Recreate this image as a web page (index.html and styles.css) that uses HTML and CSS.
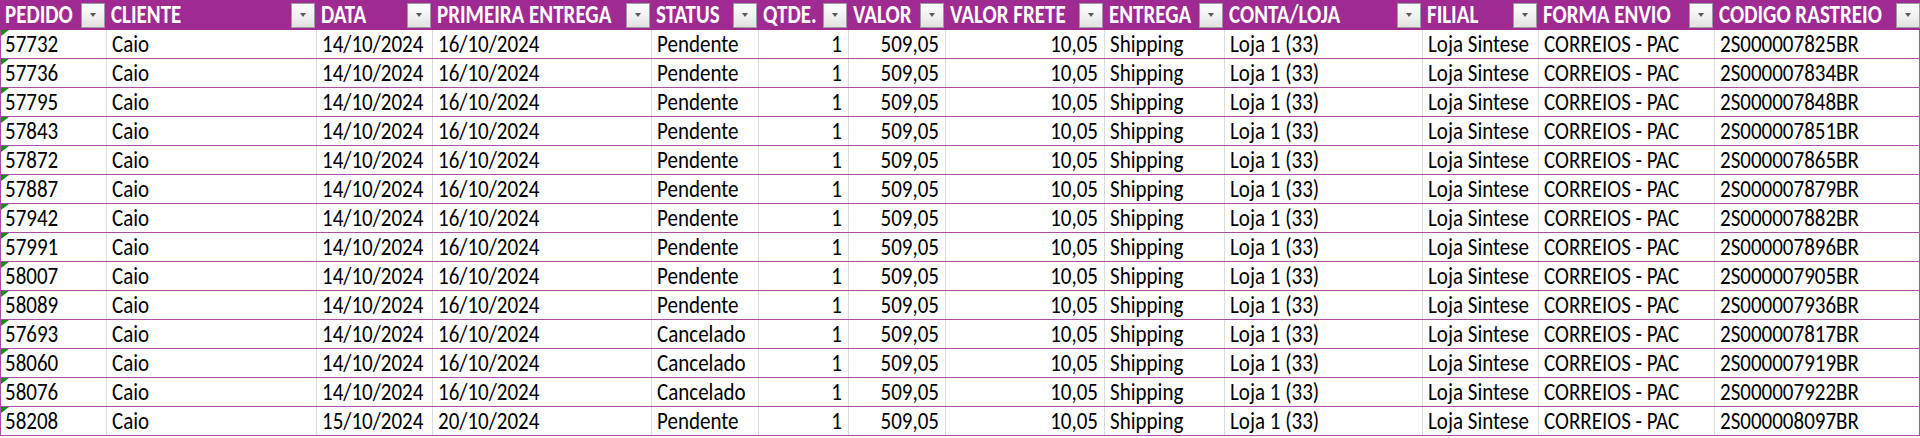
FILE: index.html
```html
<!DOCTYPE html>
<html lang="pt-BR">
<head>
<meta charset="utf-8">
<title>Pedidos</title>
<link rel="stylesheet" href="styles.css">
</head>
<body>
<div class="sheet">
  <div class="row head">
    <div class="hc"><span>PEDIDO</span><i class="fb"></i></div>
    <div class="hc"><span>CLIENTE</span><i class="fb"></i></div>
    <div class="hc"><span>DATA</span><i class="fb"></i></div>
    <div class="hc"><span>PRIMEIRA ENTREGA</span><i class="fb"></i></div>
    <div class="hc"><span>STATUS</span><i class="fb"></i></div>
    <div class="hc"><span>QTDE.</span><i class="fb"></i></div>
    <div class="hc"><span>VALOR</span><i class="fb"></i></div>
    <div class="hc"><span>VALOR FRETE</span><i class="fb"></i></div>
    <div class="hc"><span>ENTREGA</span><i class="fb"></i></div>
    <div class="hc"><span>CONTA/LOJA</span><i class="fb"></i></div>
    <div class="hc"><span>FILIAL</span><i class="fb"></i></div>
    <div class="hc"><span>FORMA ENVIO</span><i class="fb"></i></div>
    <div class="hc"><span>CODIGO RASTREIO</span><i class="fb"></i></div>
  </div>
  <div class="row"><div class="c t"><span>57732</span></div><div class="c"><span>Caio</span></div><div class="c"><span>14/10/2024</span></div><div class="c"><span>16/10/2024</span></div><div class="c"><span>Pendente</span></div><div class="c r"><span>1</span></div><div class="c r"><span>509,05</span></div><div class="c r"><span>10,05</span></div><div class="c"><span>Shipping</span></div><div class="c"><span>Loja 1 (33)</span></div><div class="c"><span>Loja Sintese</span></div><div class="c"><span>CORREIOS - PAC</span></div><div class="c"><span>2S000007825BR</span></div></div>
  <div class="row"><div class="c t"><span>57736</span></div><div class="c"><span>Caio</span></div><div class="c"><span>14/10/2024</span></div><div class="c"><span>16/10/2024</span></div><div class="c"><span>Pendente</span></div><div class="c r"><span>1</span></div><div class="c r"><span>509,05</span></div><div class="c r"><span>10,05</span></div><div class="c"><span>Shipping</span></div><div class="c"><span>Loja 1 (33)</span></div><div class="c"><span>Loja Sintese</span></div><div class="c"><span>CORREIOS - PAC</span></div><div class="c"><span>2S000007834BR</span></div></div>
  <div class="row"><div class="c t"><span>57795</span></div><div class="c"><span>Caio</span></div><div class="c"><span>14/10/2024</span></div><div class="c"><span>16/10/2024</span></div><div class="c"><span>Pendente</span></div><div class="c r"><span>1</span></div><div class="c r"><span>509,05</span></div><div class="c r"><span>10,05</span></div><div class="c"><span>Shipping</span></div><div class="c"><span>Loja 1 (33)</span></div><div class="c"><span>Loja Sintese</span></div><div class="c"><span>CORREIOS - PAC</span></div><div class="c"><span>2S000007848BR</span></div></div>
  <div class="row"><div class="c t"><span>57843</span></div><div class="c"><span>Caio</span></div><div class="c"><span>14/10/2024</span></div><div class="c"><span>16/10/2024</span></div><div class="c"><span>Pendente</span></div><div class="c r"><span>1</span></div><div class="c r"><span>509,05</span></div><div class="c r"><span>10,05</span></div><div class="c"><span>Shipping</span></div><div class="c"><span>Loja 1 (33)</span></div><div class="c"><span>Loja Sintese</span></div><div class="c"><span>CORREIOS - PAC</span></div><div class="c"><span>2S000007851BR</span></div></div>
  <div class="row"><div class="c t"><span>57872</span></div><div class="c"><span>Caio</span></div><div class="c"><span>14/10/2024</span></div><div class="c"><span>16/10/2024</span></div><div class="c"><span>Pendente</span></div><div class="c r"><span>1</span></div><div class="c r"><span>509,05</span></div><div class="c r"><span>10,05</span></div><div class="c"><span>Shipping</span></div><div class="c"><span>Loja 1 (33)</span></div><div class="c"><span>Loja Sintese</span></div><div class="c"><span>CORREIOS - PAC</span></div><div class="c"><span>2S000007865BR</span></div></div>
  <div class="row"><div class="c t"><span>57887</span></div><div class="c"><span>Caio</span></div><div class="c"><span>14/10/2024</span></div><div class="c"><span>16/10/2024</span></div><div class="c"><span>Pendente</span></div><div class="c r"><span>1</span></div><div class="c r"><span>509,05</span></div><div class="c r"><span>10,05</span></div><div class="c"><span>Shipping</span></div><div class="c"><span>Loja 1 (33)</span></div><div class="c"><span>Loja Sintese</span></div><div class="c"><span>CORREIOS - PAC</span></div><div class="c"><span>2S000007879BR</span></div></div>
  <div class="row"><div class="c t"><span>57942</span></div><div class="c"><span>Caio</span></div><div class="c"><span>14/10/2024</span></div><div class="c"><span>16/10/2024</span></div><div class="c"><span>Pendente</span></div><div class="c r"><span>1</span></div><div class="c r"><span>509,05</span></div><div class="c r"><span>10,05</span></div><div class="c"><span>Shipping</span></div><div class="c"><span>Loja 1 (33)</span></div><div class="c"><span>Loja Sintese</span></div><div class="c"><span>CORREIOS - PAC</span></div><div class="c"><span>2S000007882BR</span></div></div>
  <div class="row"><div class="c t"><span>57991</span></div><div class="c"><span>Caio</span></div><div class="c"><span>14/10/2024</span></div><div class="c"><span>16/10/2024</span></div><div class="c"><span>Pendente</span></div><div class="c r"><span>1</span></div><div class="c r"><span>509,05</span></div><div class="c r"><span>10,05</span></div><div class="c"><span>Shipping</span></div><div class="c"><span>Loja 1 (33)</span></div><div class="c"><span>Loja Sintese</span></div><div class="c"><span>CORREIOS - PAC</span></div><div class="c"><span>2S000007896BR</span></div></div>
  <div class="row"><div class="c t"><span>58007</span></div><div class="c"><span>Caio</span></div><div class="c"><span>14/10/2024</span></div><div class="c"><span>16/10/2024</span></div><div class="c"><span>Pendente</span></div><div class="c r"><span>1</span></div><div class="c r"><span>509,05</span></div><div class="c r"><span>10,05</span></div><div class="c"><span>Shipping</span></div><div class="c"><span>Loja 1 (33)</span></div><div class="c"><span>Loja Sintese</span></div><div class="c"><span>CORREIOS - PAC</span></div><div class="c"><span>2S000007905BR</span></div></div>
  <div class="row"><div class="c t"><span>58089</span></div><div class="c"><span>Caio</span></div><div class="c"><span>14/10/2024</span></div><div class="c"><span>16/10/2024</span></div><div class="c"><span>Pendente</span></div><div class="c r"><span>1</span></div><div class="c r"><span>509,05</span></div><div class="c r"><span>10,05</span></div><div class="c"><span>Shipping</span></div><div class="c"><span>Loja 1 (33)</span></div><div class="c"><span>Loja Sintese</span></div><div class="c"><span>CORREIOS - PAC</span></div><div class="c"><span>2S000007936BR</span></div></div>
  <div class="row"><div class="c t"><span>57693</span></div><div class="c"><span>Caio</span></div><div class="c"><span>14/10/2024</span></div><div class="c"><span>16/10/2024</span></div><div class="c"><span>Cancelado</span></div><div class="c r"><span>1</span></div><div class="c r"><span>509,05</span></div><div class="c r"><span>10,05</span></div><div class="c"><span>Shipping</span></div><div class="c"><span>Loja 1 (33)</span></div><div class="c"><span>Loja Sintese</span></div><div class="c"><span>CORREIOS - PAC</span></div><div class="c"><span>2S000007817BR</span></div></div>
  <div class="row"><div class="c t"><span>58060</span></div><div class="c"><span>Caio</span></div><div class="c"><span>14/10/2024</span></div><div class="c"><span>16/10/2024</span></div><div class="c"><span>Cancelado</span></div><div class="c r"><span>1</span></div><div class="c r"><span>509,05</span></div><div class="c r"><span>10,05</span></div><div class="c"><span>Shipping</span></div><div class="c"><span>Loja 1 (33)</span></div><div class="c"><span>Loja Sintese</span></div><div class="c"><span>CORREIOS - PAC</span></div><div class="c"><span>2S000007919BR</span></div></div>
  <div class="row"><div class="c t"><span>58076</span></div><div class="c"><span>Caio</span></div><div class="c"><span>14/10/2024</span></div><div class="c"><span>16/10/2024</span></div><div class="c"><span>Cancelado</span></div><div class="c r"><span>1</span></div><div class="c r"><span>509,05</span></div><div class="c r"><span>10,05</span></div><div class="c"><span>Shipping</span></div><div class="c"><span>Loja 1 (33)</span></div><div class="c"><span>Loja Sintese</span></div><div class="c"><span>CORREIOS - PAC</span></div><div class="c"><span>2S000007922BR</span></div></div>
  <div class="row"><div class="c t"><span>58208</span></div><div class="c"><span>Caio</span></div><div class="c"><span>15/10/2024</span></div><div class="c"><span>20/10/2024</span></div><div class="c"><span>Pendente</span></div><div class="c r"><span>1</span></div><div class="c r"><span>509,05</span></div><div class="c r"><span>10,05</span></div><div class="c"><span>Shipping</span></div><div class="c"><span>Loja 1 (33)</span></div><div class="c"><span>Loja Sintese</span></div><div class="c"><span>CORREIOS - PAC</span></div><div class="c"><span>2S000008097BR</span></div></div>
</div>
</body>
</html>
```

FILE: styles.css
```css
html, body {
  margin: 0;
  padding: 0;
  background: #ffffff;
}

.sheet {
  width: 1920px;
  font-family: Carlito, Calibri, Lato, "Open Sans", sans-serif;
  font-size: 21px;
  color: #000;
}

.row {
  display: grid;
  grid-template-columns: 105px 210px 116px 219px 107px 90px 97px 159px 120px 198px 116px 176px 207px;
  height: 29px;
  box-sizing: border-box;
  border-bottom: 1px solid #a94fa8;
  border-left: 1px solid #a94fa8;
  border-right: 1px solid #a94fa8;
}

.row.head {
  height: 30px;
  background: #9e2a92;
  border-color: #9e2a92;
}

.hc {
  display: flex;
  align-items: center;
  justify-content: space-between;
  min-width: 0;
  padding-left: 5px;
  padding-right: 1px;
  color: #fff;
  font-weight: bold;
  white-space: nowrap;
}

.hc:first-child {
  padding-left: 4px;
}

.hc span {
  display: inline-block;
  line-height: 24px;
  transform: scaleY(1.2);
}

.fb {
  position: relative;
  flex: none;
  width: 24px;
  height: 25px;
  box-sizing: border-box;
  margin-top: 1px;
  border: 1px solid #9c9c9c;
  background: linear-gradient(#fefefe, #f3f3f3 45%, #e2e2e2);
}

.fb::after {
  content: "";
  position: absolute;
  left: 8px;
  top: 9px;
  border-left: 3px solid transparent;
  border-right: 3px solid transparent;
  border-top: 4px solid #5a5a5a;
}

.c {
  position: relative;
  min-width: 0;
  height: 28px;
  padding: 0 5px;
  white-space: nowrap;
  border-left: 1px solid #dcdcdc;
}

.c span {
  display: inline-block;
  line-height: 24px;
  margin-top: 2px;
  transform: scaleY(1.18);
}

.c:first-child {
  border-left: none;
  padding-left: 4px;
}

.c.r {
  text-align: right;
  padding-right: 6px;
}

.c.t::before {
  content: "";
  position: absolute;
  left: 0;
  top: 0;
  border-top: 6px solid #1a8a1a;
  border-right: 8px solid transparent;
}
```
